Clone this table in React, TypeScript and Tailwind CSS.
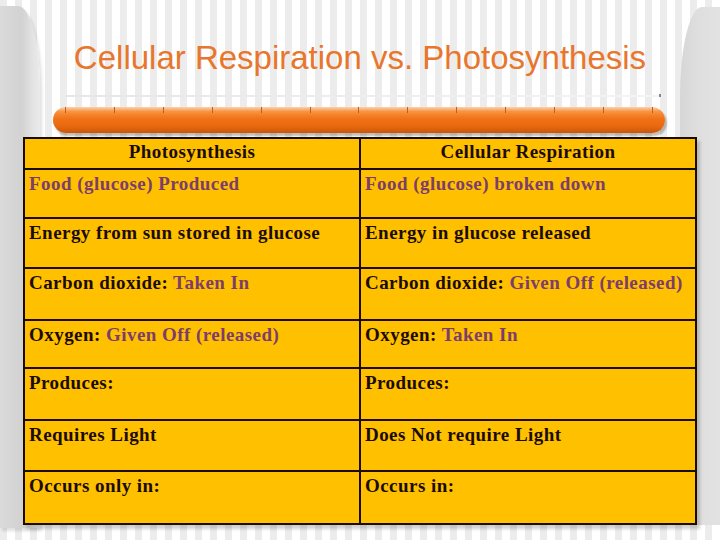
const rows: { left: [string, string?]; right: [string, string?] }[] = [
  { left: ["", "Food (glucose) Produced"], right: ["", "Food (glucose) broken down"] },
  { left: ["Energy from sun stored in glucose"], right: ["Energy in glucose released"] },
  { left: ["Carbon dioxide: ", "Taken In"], right: ["Carbon dioxide: ", "Given Off (released)"] },
  { left: ["Oxygen: ", "Given Off (released)"], right: ["Oxygen: ", "Taken In"] },
  { left: ["Produces:"], right: ["Produces:"] },
  { left: ["Requires Light"], right: ["Does Not require Light"] },
  { left: ["Occurs only in:"], right: ["Occurs in:"] },
];

const heights = ["h-[49px]", "h-[50px]", "h-[52px]", "h-[48px]", "h-[52px]", "h-[51px]", "h-[51px]"];

function Cell({ parts, last }: { parts: [string, string?]; last?: boolean }) {
  return (
    <div className={`pl-[4px] pt-[2px] whitespace-nowrap ${last ? "" : "border-r-2 border-[#1c0c00]"}`}>
      {parts[0] && <span className="text-[#1c0c00]">{parts[0]}</span>}
      {parts[1] && <span className="text-[#7d3d6b]">{parts[1]}</span>}
    </div>
  );
}

export default function App() {
  return (
    <div className="relative w-[720px] h-[540px] overflow-hidden bg-[repeating-linear-gradient(90deg,#ececec_0px,#ececec_7px,#ffffff_7px,#ffffff_15px)]">
      {/* side panels */}
      <div className="absolute left-0 top-[6px] w-[40px] h-[522px] rounded-tr-[22px_80px] bg-[linear-gradient(90deg,#dadada_0%,#d2d2d2_55%,#e2e2e2_80%,#ebebeb_100%)] shadow-[2px_3px_3px_rgba(0,0,0,0.12)]" />
      <div className="absolute right-0 top-[7px] w-[40px] h-[518px] rounded-tl-[22px_90px] bg-[linear-gradient(90deg,#d6d6d6_0%,#dedede_40%,#e2e2e2_100%)]" />

      <div className="relative flex flex-col items-center">
        <h1 className="mt-[35px] h-[46px] text-[33px] leading-[46px] text-[#e8762c] font-['Liberation_Sans',Arial,sans-serif]">
          Cellular Respiration vs. Photosynthesis
        </h1>
        <div className="mt-[14px] ml-[6px] w-[595px] h-[2px] bg-[linear-gradient(90deg,#e6e6e6,#f4f4f4)] relative">
          <span className="absolute right-0 -top-[1px] w-[2px] h-[3px] bg-[#888]" />
        </div>
        <div className="mt-[10px] -ml-[2px] relative w-[612px] h-[26px] rounded-full bg-[linear-gradient(180deg,#fbd2b0_0%,#f7923f_18%,#f17216_45%,#e8680e_75%,#c9560a_100%)] shadow-[2px_3px_2px_rgba(0,0,0,0.25)]">
          <div className="absolute left-[12px] right-[12px] top-[2px] h-[3px] flex justify-between">
            {Array.from({ length: 13 }).map((_, i) => (
              <span key={i} className="w-px h-[6px] -mt-[2px] bg-[#c85d18]" />
            ))}
          </div>
        </div>

        <div className="mt-[4px] w-[674px] border-2 border-[#1c0c00] bg-[#ffc000] shadow-[3px_4px_3px_rgba(0,0,0,0.18)] font-['Liberation_Serif','Times_New_Roman',serif] font-bold text-[19px] leading-[24px] tracking-[0.45px]">
          <div className="grid grid-cols-[336px_1fr] h-[31px] border-b-2 border-[#1c0c00] text-[#1c0c00]">
            <div className="text-center pt-[1px] border-r-2 border-[#1c0c00]">Photosynthesis</div>
            <div className="text-center pt-[1px]">Cellular Respiration</div>
          </div>
          {rows.map((r, i) => (
            <div
              key={i}
              className={`grid grid-cols-[336px_1fr] ${heights[i]} ${i < rows.length - 1 ? "border-b-2 border-[#1c0c00]" : ""}`}
            >
              <Cell parts={r.left} />
              <Cell parts={r.right} last />
            </div>
          ))}
        </div>
      </div>
    </div>
  );
}
